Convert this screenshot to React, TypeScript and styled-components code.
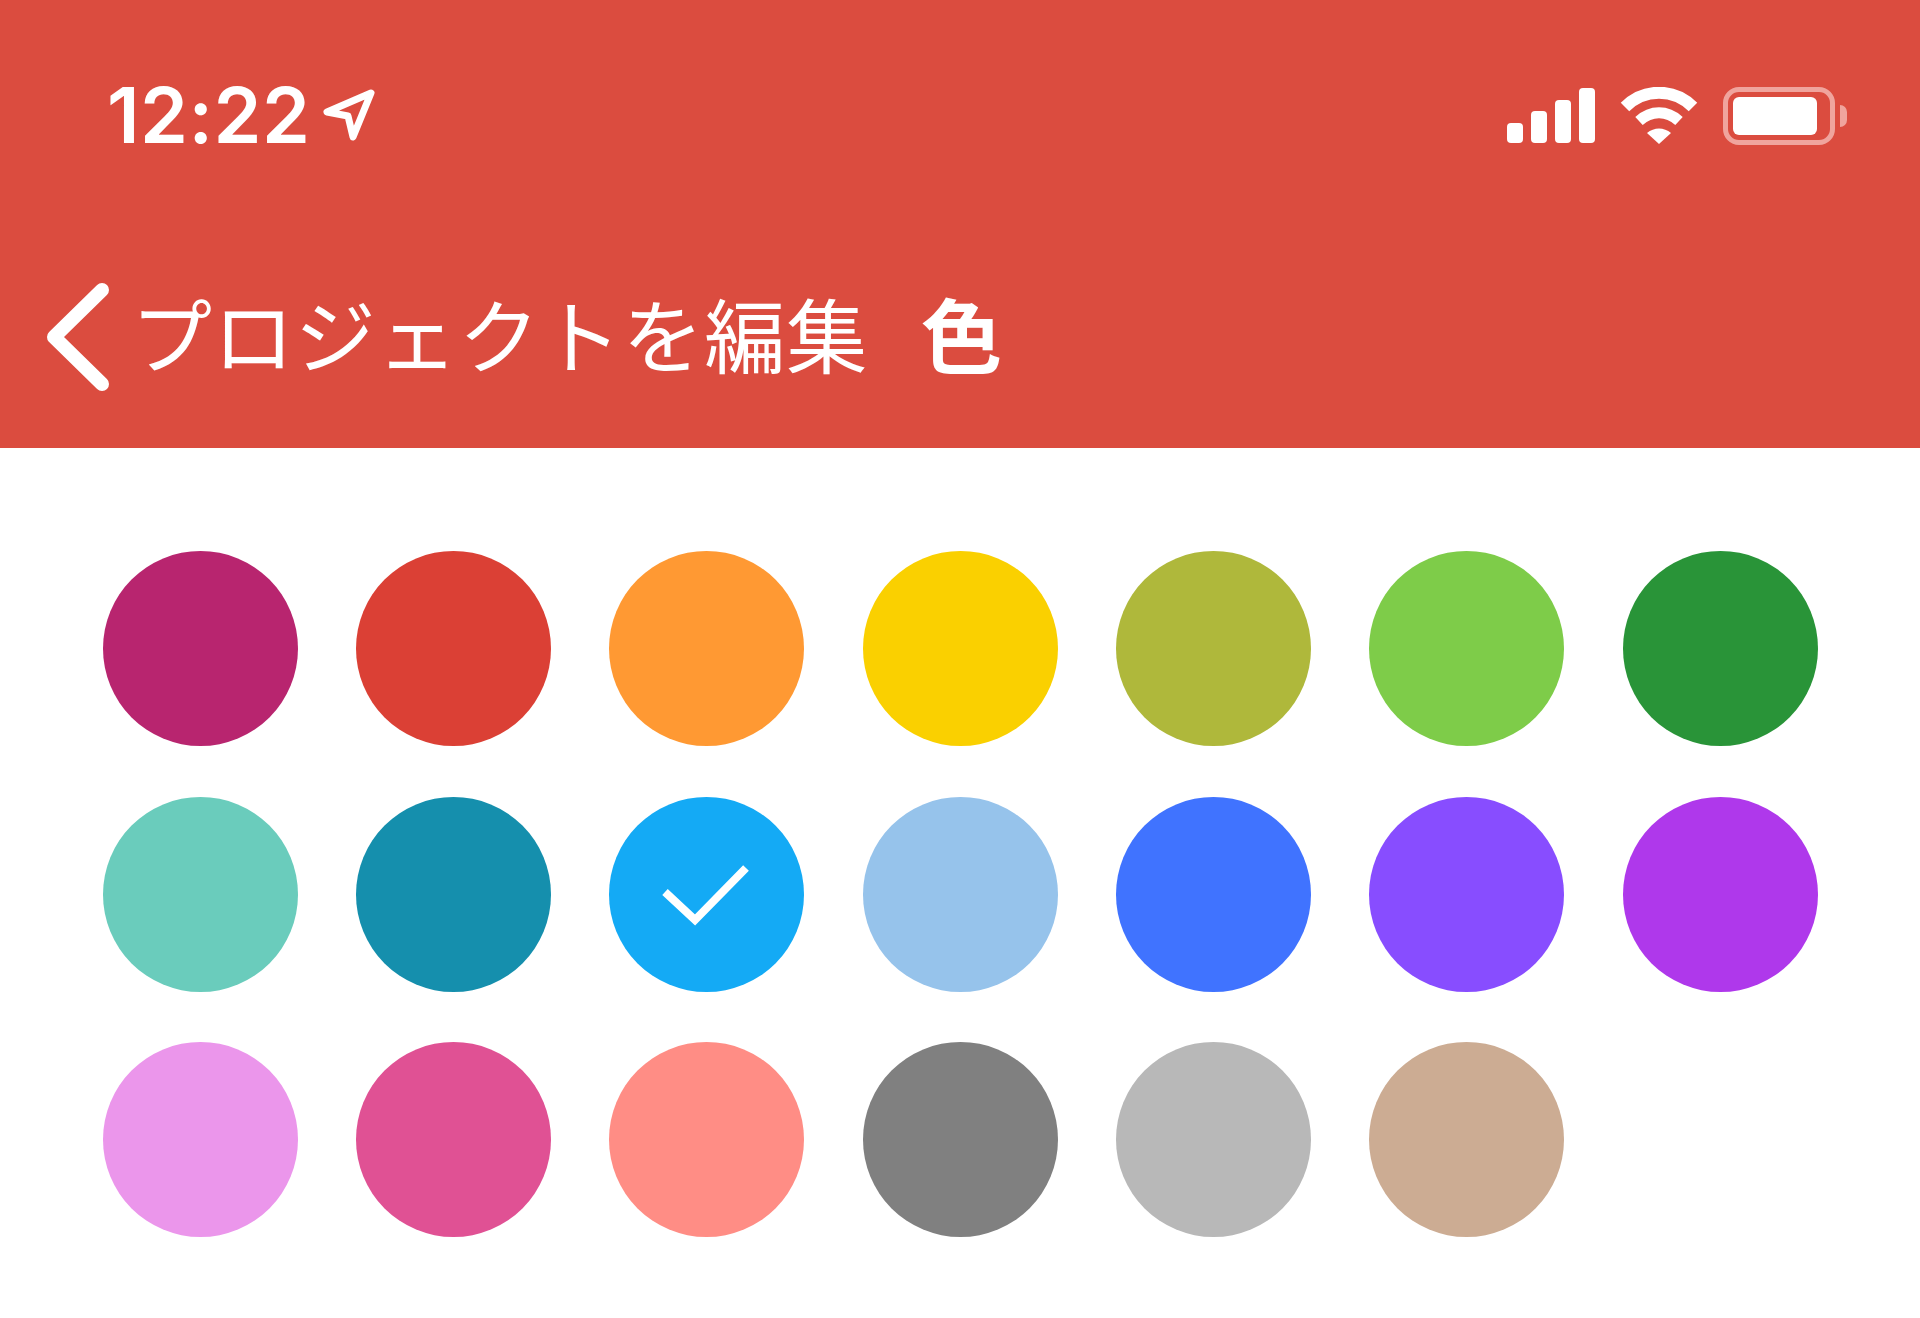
import React from "react";
import styled, { createGlobalStyle } from "styled-components";

const GlobalStyle = createGlobalStyle`
  html, body {
    margin: 0;
    padding: 0;
    background-color: #ffffff;
  }
`;

const Page = styled.div`
  width: 1920px;
  min-height: 1318px;
  background-color: #ffffff;
  overflow: hidden;
`;

const Header = styled.header`
  height: 448px;
  background-color: #db4c3f;
  display: flex;
  flex-direction: column;
`;

const StatusBar = styled.div`
  height: 278px;
  padding: 87px 73px 0 107px;
  box-sizing: border-box;
  display: flex;
  justify-content: space-between;
  align-items: flex-start;
`;

const TimeGroup = styled.div`
  display: flex;
  align-items: flex-start;
  gap: 10px;
`;

const Time = styled.span`
  font-family: "Inter", "Liberation Sans", sans-serif;
  font-size: 77px;
  font-weight: 600;
  line-height: 56px;
  letter-spacing: 0.5px;
  color: #ffffff;
`;

const StatusIcons = styled.div`
  display: flex;
  align-items: flex-start;
  gap: 25px;
`;

const Battery = styled.div`
  display: flex;
  align-items: center;
  gap: 5px;
`;

const BatteryShell = styled.div`
  width: 112px;
  height: 58px;
  box-sizing: border-box;
  padding: 5px;
  border: 5px solid #f0a49d;
  border-radius: 16px;
`;

const BatteryFill = styled.div`
  width: 84px;
  height: 38px;
  background-color: #ffffff;
  border-radius: 6px;
`;

const BatteryNub = styled.div`
  width: 7px;
  height: 22px;
  background-color: #f0a49d;
  border-radius: 0 11px 11px 0;
`;

const NavBar = styled.nav`
  display: flex;
  align-items: center;
  height: 118px;
  padding-left: 42px;
  color: #ffffff;
  font-family: "Noto Sans CJK JP", sans-serif;
  font-size: 81px;
  line-height: 118px;
`;

const BackLabel = styled.span`
  margin-left: 19px;
  margin-bottom: 10px;
  font-weight: 400;
  letter-spacing: 0.9px;
  white-space: nowrap;
`;

const Title = styled.span`
  margin-left: 53px;
  margin-bottom: 10px;
  font-weight: 700;
`;

const Palette = styled.main`
  display: grid;
  grid-template-columns: repeat(7, 195px);
  column-gap: 58.4px;
  row-gap: 50.6px;
  padding: 103px 0 0 102.5px;
`;

const Swatch = styled.div<{ $color: string }>`
  width: 195px;
  height: 195px;
  border-radius: 50%;
  background-color: ${(p) => p.$color};
  display: flex;
  align-items: center;
  justify-content: center;
`;

const colors = [
  "#b8256f",
  "#db4035",
  "#ff9933",
  "#fad000",
  "#afb83b",
  "#7ecc49",
  "#299438",
  "#6accbc",
  "#158fad",
  "#14aaf5",
  "#96c3eb",
  "#4073ff",
  "#884dff",
  "#af38eb",
  "#eb96eb",
  "#e05194",
  "#ff8d85",
  "#808080",
  "#b8b8b8",
  "#ccac93",
];

const selected = "#14aaf5";

function App() {
  return (
    <Page>
      <GlobalStyle />
      <Header>
        <StatusBar>
          <TimeGroup>
            <Time>12:22</Time>
            <svg width="56" height="54" viewBox="0 0 56 54" fill="none">
              <path
                d="M50 6 L6 25 L27 29 L32 50 Z"
                stroke="#fff"
                strokeWidth="7"
                strokeLinejoin="round"
              />
            </svg>
          </TimeGroup>
          <StatusIcons>
            <svg width="88" height="56" viewBox="0 0 88 56" fill="#fff">
              <rect x="0" y="36" width="16" height="20" rx="4" />
              <rect x="24" y="24" width="16" height="32" rx="4" />
              <rect x="48" y="13" width="16" height="43" rx="4" />
              <rect x="72" y="1" width="16" height="55" rx="4" />
            </svg>
            <svg width="78" height="57" viewBox="0 0 78 57" fill="none">
              <path
                d="M5 20 C24 1 54 1 73 20"
                stroke="#fff"
                strokeWidth="12"
              />
              <path
                d="M19 34 C31 23 47 23 59 34"
                stroke="#fff"
                strokeWidth="11"
              />
              <path d="M27 46 C34 40 44 40 51 46 L39 57 Z" fill="#fff" />
            </svg>
            <Battery>
              <BatteryShell>
                <BatteryFill />
              </BatteryShell>
              <BatteryNub />
            </Battery>
          </StatusIcons>
        </StatusBar>
        <NavBar>
          <svg width="70" height="114" viewBox="0 0 70 114" fill="none">
            <path
              d="M60 10 L12 57 L60 104"
              stroke="#fff"
              strokeWidth="14"
              strokeLinecap="round"
              strokeLinejoin="round"
            />
          </svg>
          <BackLabel>プロジェクトを編集</BackLabel>
          <Title>色</Title>
        </NavBar>
      </Header>
      <Palette>
        {colors.map((color) => (
          <Swatch key={color} $color={color}>
            {color === selected && (
              <svg width="195" height="195" viewBox="0 0 195 195" fill="none">
                <path
                  d="M56 95 L86 123 L137 71"
                  stroke="#fff"
                  strokeWidth="8"
                />
              </svg>
            )}
          </Swatch>
        ))}
      </Palette>
    </Page>
  );
}

export default App;
